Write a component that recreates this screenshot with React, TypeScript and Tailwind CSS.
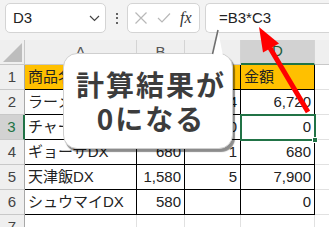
import React from "react";

const rows = [
  { n: 1, a: "商品名", b: "単価", c: "数量", d: "金額", head: true },
  { n: 2, a: "ラーメンDX", b: "1,680", c: "4", d: "6,720" },
  { n: 3, a: "チャーハンDX", b: "1,580", c: "0", d: "0" },
  { n: 4, a: "ギョーザDX", b: "680", c: "1", d: "680" },
  { n: 5, a: "天津飯DX", b: "1,580", c: "5", d: "7,900" },
  { n: 6, a: "シュウマイDX", b: "580", c: "", d: "0" },
];

function RowHead({ n, sel }: { n: number | string; sel?: boolean }) {
  return (
    <div
      className={
        sel
          ? "flex h-full w-[25px] shrink-0 items-center justify-center border-b border-r-2 border-b-[#c8c8c8] border-r-[#217346] bg-[#d2d2d2] text-[#217346]"
          : "flex h-full w-[25px] shrink-0 items-center justify-center border-b border-r border-b-[#c8c8c8] border-r-[#a8a8a8] bg-[#efefef] text-[#444]"
      }
    >
      {n}
    </div>
  );
}

export default function App() {
  return (
    <div className="relative h-[227px] w-[329px] overflow-hidden bg-white font-['Liberation_Sans','Noto_Sans_CJK_JP',sans-serif] text-[15px] text-[#222]">
      {/* toolbar */}
      <div className="flex h-[40px] items-start bg-[#f3f3f3] pl-[5px] pt-[3px]">
        <div className="flex h-[30px] w-[101px] shrink-0 items-center justify-between rounded-[5px] border border-[#d4d4d4] bg-white pl-[7px] pr-[5px]">
          <span className="text-[#222]">D3</span>
          <svg width="11" height="7" viewBox="0 0 11 7">
            <path d="M1 1 L5.5 5.5 L10 1" fill="none" stroke="#444" strokeWidth="1.2" />
          </svg>
        </div>
        <div className="flex h-[30px] w-[21px] shrink-0 flex-col items-center justify-center gap-[2.5px]">
          <span className="h-[2px] w-[2px] rounded-full bg-[#333]" />
          <span className="h-[2px] w-[2px] rounded-full bg-[#333]" />
          <span className="h-[2px] w-[2px] rounded-full bg-[#333]" />
        </div>
        <div className="flex h-[30px] w-[73px] shrink-0 items-center rounded-[5px] border border-[#d4d4d4] bg-white pl-[6px]">
          <svg width="14" height="14" viewBox="0 0 14 14" className="mr-[9px]">
            <path d="M1.5 1.5 L12.5 12.5 M12.5 1.5 L1.5 12.5" stroke="#b8b8b8" strokeWidth="1.2" />
          </svg>
          <svg width="14" height="12" viewBox="0 0 14 12" className="mr-[9px]">
            <path d="M1 6 L5 10 L13 1.5" fill="none" stroke="#b8b8b8" strokeWidth="1.2" />
          </svg>
          <span className="font-['Liberation_Serif',serif] text-[16px] italic text-[#333]">fx</span>
        </div>
        <div className="ml-[5px] flex h-[30px] flex-1 items-center rounded-l-[5px] border border-r-0 border-[#d4d4d4] bg-white pl-[13px] text-[#222]">
          =B3*C3
        </div>
      </div>

      {/* column headers */}
      <div className="flex h-[25px]">
        <div className="relative h-full w-[25px] shrink-0 border-b border-r border-b-[#c8c8c8] border-r-[#c8c8c8] bg-[#efefef]">
          <svg width="19" height="19" viewBox="0 0 19 19" className="absolute bottom-[2px] right-[2px]">
            <polygon points="19,0 19,19 0,19" fill="#bdbdbd" />
          </svg>
        </div>
        <div className="flex h-full w-[112px] shrink-0 items-center justify-center border-b border-r border-b-[#c8c8c8] border-r-[#d4d4d4] bg-[#efefef] text-[#555]">A</div>
        <div className="flex h-full w-[48px] shrink-0 items-center justify-center border-b border-r border-b-[#c8c8c8] border-r-[#d4d4d4] bg-[#efefef] text-[#555]">B</div>
        <div className="flex h-full w-[56px] shrink-0 items-center justify-center border-b border-r border-b-[#c8c8c8] border-r-[#d4d4d4] bg-[#efefef] text-[#555]" />
        <div className="flex h-full w-[74px] shrink-0 items-center justify-center border-b-2 border-r border-b-[#217346] border-r-[#d4d4d4] bg-[#d2d2d2] text-[#215a36]">D</div>
        <div className="h-full flex-1 border-b border-b-[#c8c8c8] bg-[#efefef]" />
      </div>

      {/* rows */}
      {rows.map((r) => (
        <div key={r.n} className="flex h-[25px]">
          <RowHead n={r.n} sel={r.n === 3} />
          <div className={`flex h-full w-[112px] shrink-0 items-center overflow-hidden whitespace-nowrap border-b border-r border-black px-[3px] ${r.head ? "bg-[#ffc000]" : ""}`}>
            {r.a}
          </div>
          <div className={`flex h-full w-[48px] shrink-0 items-center overflow-hidden whitespace-nowrap border-b border-r border-black px-[3px] ${r.head ? "justify-start bg-[#ffc000]" : "justify-end"}`}>
            {r.b}
          </div>
          <div className={`flex h-full w-[56px] shrink-0 items-center overflow-hidden whitespace-nowrap border-b border-r border-black px-[3px] ${r.head ? "justify-start bg-[#ffc000]" : "justify-end"}`}>
            {r.c}
          </div>
          <div className={`flex h-full w-[74px] shrink-0 items-center overflow-hidden whitespace-nowrap border-b border-r border-black px-[3px] ${r.head ? "justify-start bg-[#ffc000]" : "justify-end"}`}>
            {r.d}
          </div>
          <div className="h-full flex-1 border-b border-[#e1e1e1]" />
        </div>
      ))}
      <div className="flex h-[25px]">
        <RowHead n={7} />
        <div className="h-full w-[112px] shrink-0 border-b border-r border-[#e1e1e1]" />
        <div className="h-full w-[48px] shrink-0 border-b border-r border-[#e1e1e1]" />
        <div className="h-full w-[56px] shrink-0 border-b border-r border-[#e1e1e1]" />
        <div className="h-full w-[74px] shrink-0 border-b border-r border-[#e1e1e1]" />
        <div className="h-full flex-1 border-b border-[#e1e1e1]" />
      </div>

      {/* active cell D3 */}
      <div className="absolute left-[240px] top-[114px] h-[27px] w-[76px] border-2 border-[#217346]" />
      <div className="absolute left-[312px] top-[137px] h-[6px] w-[6px] border border-white bg-[#217346]" />

      {/* callout */}
      <div className="absolute left-[63px] top-[53px] flex h-[96px] w-[170px] flex-col items-center justify-center rounded-[14px] border border-[#cfcfcf] bg-white pl-[6px] font-['Noto_Sans_CJK_JP',sans-serif] text-[28px] font-bold leading-[34px] tracking-[2px] text-[#3c3c3c] shadow-[2px_3px_1px_rgba(0,0,0,0.45)]">
        <span>計算結果が</span>
        <span>0になる</span>
      </div>

      {/* overlays: tail + arrow */}
      <svg className="pointer-events-none absolute left-0 top-0" width="329" height="227" viewBox="0 0 329 227">
        <polygon points="211,56 218,30 223,56" fill="#ffffff" />
        <line x1="218" y1="30" x2="212.5" y2="54" stroke="#6f6f6f" strokeWidth="1.6" />
        <line x1="308" y1="112" x2="270" y2="48" stroke="#ff0000" strokeWidth="5" />
        <polygon points="259,27 279,43.5 263,52.5" fill="#ff0000" />
      </svg>
    </div>
  );
}
